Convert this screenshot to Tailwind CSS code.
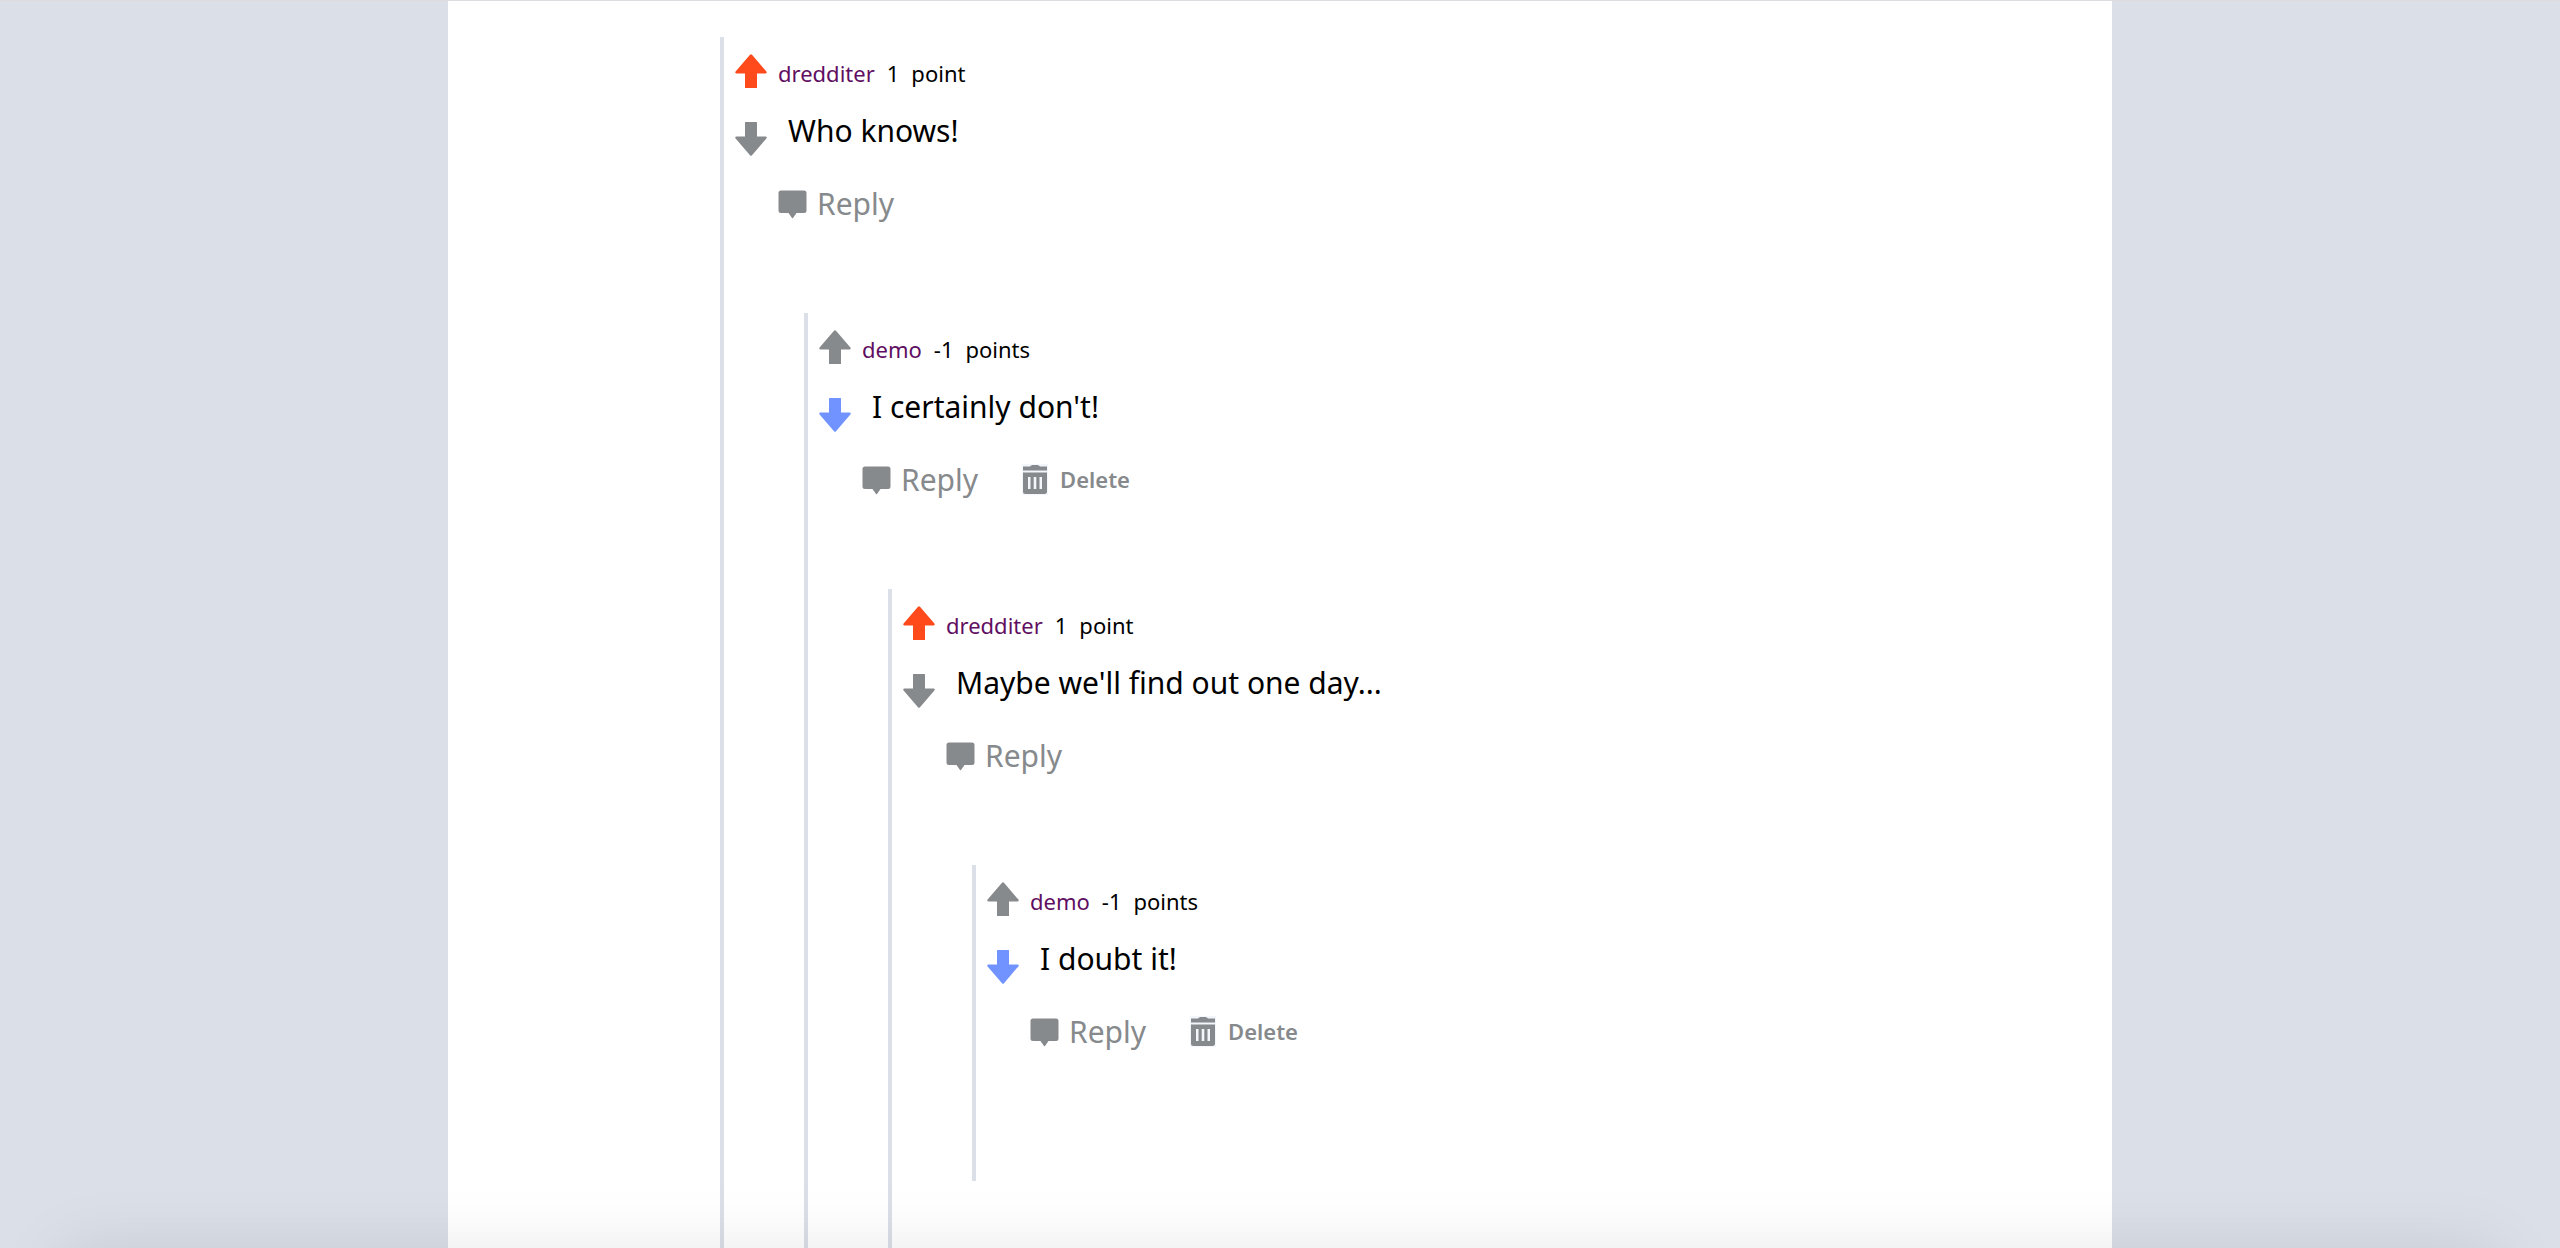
<!DOCTYPE html>
<html lang="en">
<head>
<meta charset="utf-8">
<meta name="viewport" content="width=device-width, initial-scale=1">
<title>Comments</title>
<script src="https://cdn.jsdelivr.net/npm/@tailwindcss/browser@4"></script>
</head>
<body class="bg-[#dadfe8] font-['Noto_Sans',sans-serif] text-[30px] text-black">

<!-- Shared icons -->
<svg class="hidden" aria-hidden="true">
  <symbol id="arrow" viewBox="0 0 32 34"><path d="M15 .8Q16-.2 17 .8L31.4 17.600Q32.400 19.300 30.600 19.500H22V33.500Q22 34 21.500 34H10.500Q10 34 10 33.500V19.500H1.400Q-.4 19.300 .6 17.600Z"/></symbol>
  <symbol id="bubble" viewBox="0 0 29 29"><path d="M3 .5H26Q28.500 .5 28.500 3V20.500Q28.500 23 26 23H18.500L15 28Q14.500 28.600 14 28L10.500 23H3Q.5 23 .5 20.500V3Q.5 .5 3 .5Z"/></symbol>
  <symbol id="trash" viewBox="0 0 26 31"><path fill="#f3f7fb" d="M0 0H26V31H0Z"/><path d="M1 2.500H8Q9 1 10.500 1H15.500Q17 1 18 2.500H25V6.500H1Z"/><path fill-rule="evenodd" d="M1 8.500H25V27.500Q25 30 22.500 30H3.500Q1 30 1 27.500ZM6 13V25H8.500V13ZM11.700 13V25H14.300V13ZM17.500 13V25H20V13Z"/></symbol>
</svg>

<main class="mx-auto h-screen w-[65%] overflow-hidden border-t border-[#dcdce1] bg-white pt-9 pl-[272px]">
  <section class="border-l-4 border-[#dadfe8]">
    <article class="flex h-[276px]">
      <div class="flex w-[54px] shrink-0 flex-col items-center gap-[34px] pt-[17px]">
        <button aria-label="Upvote"><svg class="block h-[34px] w-8 fill-[#ff4a1c]"><use href="#arrow"/></svg></button>
        <button aria-label="Downvote"><svg class="block h-[34px] w-8 rotate-180 fill-[#878a8c]"><use href="#arrow"/></svg></button>
      </div>
      <div class="pt-3.5">
        <div class="flex h-11 items-center gap-3 text-[22px]"><a href="#" class="text-[#5f0f62]">dredditer</a><span>1</span><span>point</span></div>
        <p class="flex h-[70px] items-center pl-2.5">Who knows!</p>
        <div class="flex h-[76px] items-center gap-11 text-[#878a8c]">
          <button class="flex items-center gap-2.5"><svg class="mt-0.5 size-[29px] fill-[#878a8c]"><use href="#bubble"/></svg>Reply</button>
        </div>
      </div>
    </article>

    <div class="pb-20 pl-20">
      <section class="border-l-4 border-[#dadfe8]">
        <article class="flex h-[276px]">
          <div class="flex w-[54px] shrink-0 flex-col items-center gap-[34px] pt-[17px]">
            <button aria-label="Upvote"><svg class="block h-[34px] w-8 fill-[#878a8c]"><use href="#arrow"/></svg></button>
            <button aria-label="Downvote"><svg class="block h-[34px] w-8 rotate-180 fill-[#7193ff]"><use href="#arrow"/></svg></button>
          </div>
          <div class="pt-3.5">
            <div class="flex h-11 items-center gap-3 text-[22px]"><a href="#" class="text-[#5f0f62]">demo</a><span>-1</span><span>points</span></div>
            <p class="flex h-[70px] items-center pl-2.5">I certainly don't!</p>
            <div class="flex h-[76px] items-center gap-11 text-[#878a8c]">
              <button class="flex items-center gap-2.5"><svg class="mt-0.5 size-[29px] fill-[#878a8c]"><use href="#bubble"/></svg>Reply</button>
              <button class="flex items-center gap-3 text-[22px] font-semibold"><svg class="h-[31px] w-[26px] fill-[#878a8c]"><use href="#trash"/></svg>Delete</button>
            </div>
          </div>
        </article>

        <div class="pb-20 pl-20">
          <section class="border-l-4 border-[#dadfe8]">
            <article class="flex h-[276px]">
              <div class="flex w-[54px] shrink-0 flex-col items-center gap-[34px] pt-[17px]">
                <button aria-label="Upvote"><svg class="block h-[34px] w-8 fill-[#ff4a1c]"><use href="#arrow"/></svg></button>
                <button aria-label="Downvote"><svg class="block h-[34px] w-8 rotate-180 fill-[#878a8c]"><use href="#arrow"/></svg></button>
              </div>
              <div class="pt-3.5">
                <div class="flex h-11 items-center gap-3 text-[22px]"><a href="#" class="text-[#5f0f62]">dredditer</a><span>1</span><span>point</span></div>
                <p class="flex h-[70px] items-center pl-2.5">Maybe we'll find out one day...</p>
                <div class="flex h-[76px] items-center gap-11 text-[#878a8c]">
                  <button class="flex items-center gap-2.5"><svg class="mt-0.5 size-[29px] fill-[#878a8c]"><use href="#bubble"/></svg>Reply</button>
                </div>
              </div>
            </article>

            <div class="pb-20 pl-20">
              <section class="border-l-4 border-[#dadfe8] pb-10">
                <article class="flex h-[276px]">
                  <div class="flex w-[54px] shrink-0 flex-col items-center gap-[34px] pt-[17px]">
                    <button aria-label="Upvote"><svg class="block h-[34px] w-8 fill-[#878a8c]"><use href="#arrow"/></svg></button>
                    <button aria-label="Downvote"><svg class="block h-[34px] w-8 rotate-180 fill-[#7193ff]"><use href="#arrow"/></svg></button>
                  </div>
                  <div class="pt-3.5">
                    <div class="flex h-11 items-center gap-3 text-[22px]"><a href="#" class="text-[#5f0f62]">demo</a><span>-1</span><span>points</span></div>
                    <p class="flex h-[70px] items-center pl-2.5">I doubt it!</p>
                    <div class="flex h-[76px] items-center gap-11 text-[#878a8c]">
                      <button class="flex items-center gap-2.5"><svg class="mt-0.5 size-[29px] fill-[#878a8c]"><use href="#bubble"/></svg>Reply</button>
                      <button class="flex items-center gap-3 text-[22px] font-semibold"><svg class="h-[31px] w-[26px] fill-[#878a8c]"><use href="#trash"/></svg>Delete</button>
                    </div>
                  </div>
                </article>
              </section>
            </div>
          </section>
        </div>
      </section>
    </div>
  </section>
</main>

<!-- Hairline and shade at the window's edges -->
<div class="pointer-events-none fixed inset-x-0 top-0 h-px bg-[#dcdce1]"></div>
<div class="pointer-events-none fixed inset-x-16 top-full h-20 shadow-[0_4px_70px_rgba(0,0,0,0.1)]"></div>
</body>
</html>
